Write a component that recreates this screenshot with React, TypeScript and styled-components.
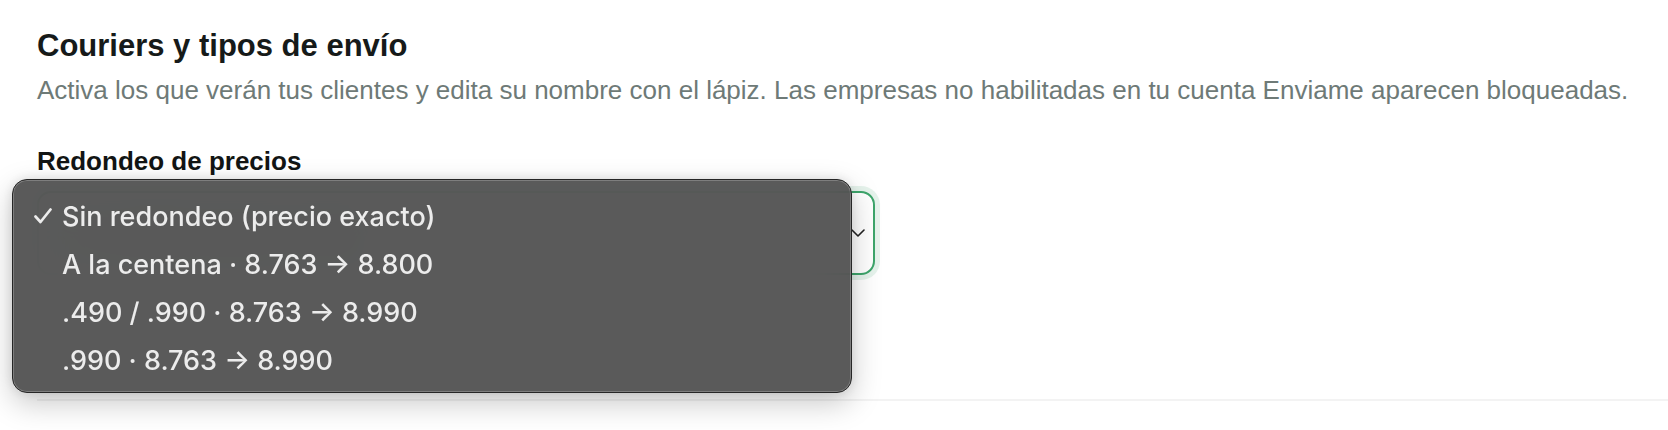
import React from "react";
import styled, { createGlobalStyle } from "styled-components";

const Global = createGlobalStyle`
  html, body { margin: 0; padding: 0; background: #ffffff; }
  body { font-family: "Liberation Sans", Arial, sans-serif; }
  * { box-sizing: border-box; }
`;

const Page = styled.div`
  width: 1668px;
  height: 430px;
  overflow: hidden;
  background: #ffffff;
  display: flex;
  flex-direction: column;
  padding: 27px 0 0 37px;
`;

const Title = styled.h2`
  margin: 0;
  font-family: "Liberation Sans", Arial, sans-serif;
  font-weight: 700;
  font-size: 31px;
  line-height: 38px;
  color: #161a19;
`;

const Subtitle = styled.p`
  margin: 10px 0 0;
  font-family: "Liberation Sans", Arial, sans-serif;
  font-size: 26px;
  line-height: 30px;
  color: #6e7a77;
  white-space: nowrap;
`;

const Field = styled.div`
  position: relative;
  margin-top: 41px;
  display: flex;
  flex-direction: column;
  width: 838px;
`;

const Label = styled.label`
  font-family: "Liberation Sans", Arial, sans-serif;
  font-weight: 700;
  font-size: 26px;
  line-height: 30px;
  color: #121514;
`;

const SelectBox = styled.div`
  margin-top: 15px;
  height: 84px;
  width: 838px;
  border: 2px solid #3da56b;
  border-radius: 14px;
  background: #ffffff;
  box-shadow: 0 0 0 5px rgba(61, 165, 107, 0.13);
  display: flex;
  align-items: center;
  justify-content: space-between;
  padding: 0 8px 0 22px;
  font-size: 24px;
  color: #1a1f1e;
`;

const Chevron = styled.svg`
  width: 14px;
  height: 8px;
  flex: none;
`;

const Menu = styled.ul`
  position: absolute;
  left: -25px;
  top: 33px;
  width: 840px;
  margin: 0;
  padding: 12px 0 8px;
  list-style: none;
  border-radius: 15px;
  background: rgba(80, 80, 80, 0.94);
  backdrop-filter: blur(24px);
  -webkit-backdrop-filter: blur(24px);
  border: 1px solid #262626;
  box-shadow: inset 0 0 0 1px rgba(255, 255, 255, 0.22),
    0 10px 30px rgba(0, 0, 0, 0.22), 0 0 12px rgba(0, 0, 0, 0.1);
  z-index: 10;
`;

const Option = styled.li`
  height: 48px;
  display: flex;
  align-items: center;
  padding-left: 21px;
  font-family: Inter, "Liberation Sans", sans-serif;
  font-weight: 500;
  font-size: 27px;
  color: #ececec;
  white-space: nowrap;
`;

const CheckSlot = styled.span`
  width: 28px;
  flex: none;
  display: flex;
  align-items: center;
`;

const Divider = styled.div`
  margin-top: 124px;
  height: 2px;
  background: #f3f3f3;
`;

const options = [
  "Sin redondeo (precio exacto)",
  "A la centena · 8.763 → 8.800",
  ".490 / .990 · 8.763 → 8.990",
  ".990 · 8.763 → 8.990",
];

export default function App() {
  return (
    <>
      <Global />
      <Page>
        <Title>Couriers y tipos de envío</Title>
        <Subtitle>
          Activa los que verán tus clientes y edita su nombre con el lápiz. Las
          empresas no habilitadas en tu cuenta Enviame aparecen bloqueadas.
        </Subtitle>
        <Field>
          <Label>Redondeo de precios</Label>
          <SelectBox>
            <span>Sin redondeo (precio exacto)</span>
            <Chevron viewBox="0 0 14 8">
              <polyline
                points="1,1 7,7 13,1"
                fill="none"
                stroke="#222"
                strokeWidth="1.6"
                strokeLinecap="round"
                strokeLinejoin="round"
              />
            </Chevron>
          </SelectBox>
          <Menu>
            {options.map((o, i) => (
              <Option key={o}>
                <CheckSlot>
                  {i === 0 && (
                    <svg width="18" height="16" viewBox="0 0 18 16">
                      <polyline
                        points="1.5,8.5 6.5,14 16.5,1.5"
                        fill="none"
                        stroke="#ececec"
                        strokeWidth="2.7"
                        strokeLinecap="round"
                        strokeLinejoin="round"
                      />
                    </svg>
                  )}
                </CheckSlot>
                {o}
              </Option>
            ))}
          </Menu>
        </Field>
        <Divider />
      </Page>
    </>
  );
}
